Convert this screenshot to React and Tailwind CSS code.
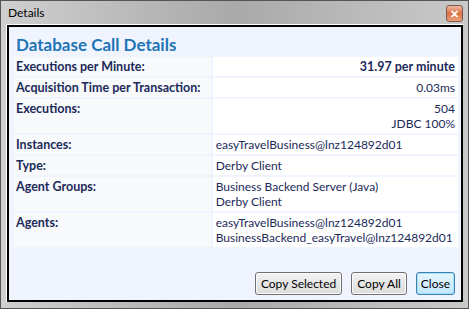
const ROWS = [
  { label: 'Executions per Minute:', value: ['31.97 per minute'], right: true, bold: true },
  { label: 'Acquisition Time per Transaction:', value: ['0.03ms'], right: true },
  { label: 'Executions:', value: ['504', 'JDBC 100%'], right: true },
  { label: 'Instances:', value: ['easyTravelBusiness@lnz124892d01'] },
  { label: 'Type:', value: ['Derby Client'] },
  { label: 'Agent Groups:', value: ['Business Backend Server (Java)', 'Derby Client'] },
  { label: 'Agents:', value: ['easyTravelBusiness@lnz124892d01', 'BusinessBackend_easyTravel@lnz124892d01'] },
];

function Btn({ children, focused }) {
  return (
    <button
      className={
        focused
          ? 'h-[23px] px-[4px] rounded-[3px] border border-[#3c7fb1] bg-gradient-to-b from-[#e8f6fd] to-[#bee6fd] shadow-[inset_0_0_0_1px_#a7e0fb] text-[12px] text-black'
          : 'h-[23px] px-[5px] rounded-[3px] border border-[#707070] bg-gradient-to-b from-[#f2f2f2] to-[#dcdcdc] shadow-[inset_0_0_0_1px_#fcfcfc] text-[12px] text-black'
      }
    >
      {children}
    </button>
  );
}

export default function App() {
  return (
    <div className="w-[469px] h-[309px] flex flex-col bg-gradient-to-r from-[#cfcfcf] via-[#a9a9a9] to-[#c9c9c9] border border-[#555] font-['Lato','Noto_Sans',sans-serif]">
      {/* Title bar */}
      <div className="h-[23px] flex items-center justify-between pl-[7px] pr-[5px]">
        <span className="text-[12px] text-black">Details</span>
        <div className="w-[17px] h-[17px] mt-[2px] rounded-[3px] border border-[#7a5a50] bg-gradient-to-b from-[#f0b9a0] via-[#d9703f] to-[#efa27c] flex items-center justify-center">
          <span className="text-white text-[11px] font-bold leading-none">✕</span>
        </div>
      </div>

      {/* Content */}
      <div className="flex-1 ml-[5px] mr-[5px] mb-[6px] border-l border-t border-white">
        <div className="h-full border-2 border-black bg-[#f0f4ff] flex flex-col pl-[5px] pr-[3px]">
          <div className="text-[#1f74b6] text-[17px] font-bold leading-none pt-[9px] pl-[2px] h-[30px]">
            Database Call Details
          </div>

          <div className="flex flex-col gap-[2px]">
            {ROWS.map((r) => (
              <div key={r.label} className={'flex gap-[2px] ' + (r.value.length > 1 ? 'h-[34px]' : 'h-[19px]')}>
                <div className="w-[198px] bg-[#f7f9fa] px-[2px] pt-[2px] text-[12.5px] leading-[15px] font-bold text-[#1c2a5a] whitespace-nowrap">
                  {r.label}
                </div>
                <div
                  className={
                    'w-[247px] bg-white px-[3px] pt-[2px] leading-[15px] text-[#1c2a5a] whitespace-nowrap ' +
                    (r.right ? 'text-right ' : '') +
                    (r.bold ? 'font-bold text-[12.5px]' : 'text-[12px]')
                  }
                >
                  {r.value.map((v) => (
                    <div key={v}>{v}</div>
                  ))}
                </div>
              </div>
            ))}
          </div>

          <div className="mt-auto flex justify-end gap-[9px] pb-[5px] pr-[3px]">
            <Btn>Copy Selected</Btn>
            <Btn>Copy All</Btn>
            <Btn focused>Close</Btn>
          </div>
        </div>
      </div>
    </div>
  );
}
